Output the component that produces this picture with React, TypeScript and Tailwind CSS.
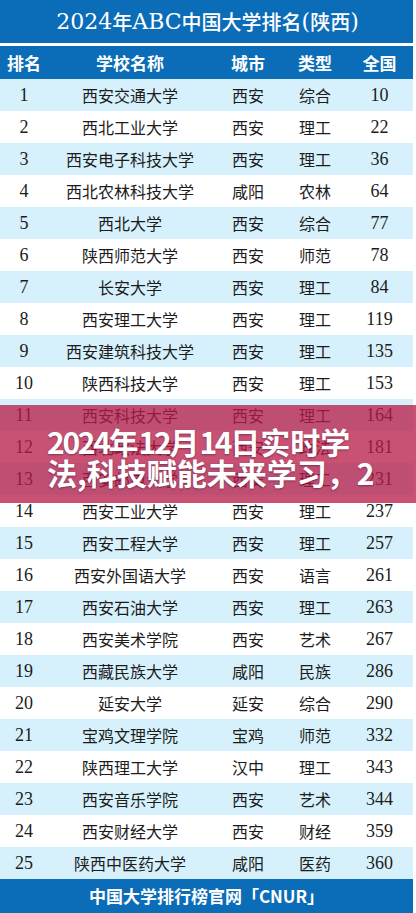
const rows: [string, string, string, string, string][] = [
  ['1', '西安交通大学', '西安', '综合', '10'],
  ['2', '西北工业大学', '西安', '理工', '22'],
  ['3', '西安电子科技大学', '西安', '理工', '36'],
  ['4', '西北农林科技大学', '咸阳', '农林', '64'],
  ['5', '西北大学', '西安', '综合', '77'],
  ['6', '陕西师范大学', '西安', '师范', '78'],
  ['7', '长安大学', '西安', '理工', '84'],
  ['8', '西安理工大学', '西安', '理工', '119'],
  ['9', '西安建筑科技大学', '西安', '理工', '135'],
  ['10', '陕西科技大学', '西安', '理工', '153'],
  ['11', '西安科技大学', '西安', '理工', '164'],
  ['12', '西北政法大学', '西安', '政法', '181'],
  ['13', '西安邮电大学', '西安', '理工', '231'],
  ['14', '西安工业大学', '西安', '理工', '237'],
  ['15', '西安工程大学', '西安', '理工', '257'],
  ['16', '西安外国语大学', '西安', '语言', '261'],
  ['17', '西安石油大学', '西安', '理工', '263'],
  ['18', '西安美术学院', '西安', '艺术', '267'],
  ['19', '西藏民族大学', '咸阳', '民族', '286'],
  ['20', '延安大学', '延安', '综合', '290'],
  ['21', '宝鸡文理学院', '宝鸡', '师范', '332'],
  ['22', '陕西理工大学', '汉中', '理工', '343'],
  ['23', '西安音乐学院', '西安', '艺术', '344'],
  ['24', '西安财经大学', '西安', '财经', '359'],
  ['25', '陕西中医药大学', '咸阳', '医药', '360'],
]

const cols = 'grid grid-cols-[48px_164px_72px_62px_67px] items-center'
const num = "font-['Liberation_Serif','Noto_Sans_CJK_SC',serif] text-[18px]"
const cjk = "font-['Noto_Sans_CJK_SC',sans-serif] text-[16px]"
const tcjk = "font-['Noto_Sans_CJK_SC',sans-serif] text-[20px] font-medium"
const dg = 'tracking-[-2.3px]'

export default function App() {
  return (
    <div className="relative w-[416px] h-[913px] overflow-hidden bg-white">
      <div className="w-[413px]">
        <div className="h-[43px] bg-[#0b6db7] flex items-center justify-center text-white text-[22px] font-['DejaVu_Serif','Noto_Sans_CJK_SC',serif] pl-[2px]">
          <span>2024</span>
          <span className={tcjk}>年</span>
          <span>ABC</span>
          <span className={tcjk}>中国大学排名</span>
          <span>(</span>
          <span className={tcjk}>陕西</span>
          <span>)</span>
        </div>
        <div className="h-[3px]" />
        <div className={`${cols} h-[33px] bg-[#0b6db7] text-white font-bold text-[17px] font-['Noto_Sans_CJK_SC',sans-serif] text-center`}>
          <div>排名</div>
          <div>学校名称</div>
          <div>城市</div>
          <div>类型</div>
          <div>全国</div>
        </div>
        {rows.map((r, i) => (
          <div
            key={r[0]}
            className={`${cols} h-[32px] text-center text-[#1c1c1c] ${i % 2 === 0 ? 'bg-[#d6f1fb]' : 'bg-white'}`}
          >
            <div className={num}>{r[0]}</div>
            <div className={cjk}>{r[1]}</div>
            <div className={cjk}>{r[2]}</div>
            <div className={cjk}>{r[3]}</div>
            <div className={num}>{r[4]}</div>
          </div>
        ))}
        <div className="h-[34px] bg-[#0b6db7] flex items-center justify-center text-white font-bold text-[17px] font-['Noto_Sans_CJK_SC',sans-serif]">
          中国大学排行榜官网「CNUR」
        </div>
      </div>

      <div className="absolute left-0 top-[405px] w-[416px] h-[98px] bg-[#b81a48]/[0.76] flex flex-col justify-center pl-[47px] overflow-hidden">
        <div className="text-white font-bold text-[30px] leading-[31px] whitespace-nowrap font-['Noto_Sans_CJK_SC',sans-serif] [text-shadow:0_1px_2px_rgba(0,0,0,0.35)] mt-[6px]">
          <div>
            <span className={dg}>2024</span>年<span className={dg}>12</span>月<span className={dg}>14</span>日实时学
          </div>
          <div>法,科技赋能未来学习，2</div>
        </div>
      </div>
    </div>
  )
}
